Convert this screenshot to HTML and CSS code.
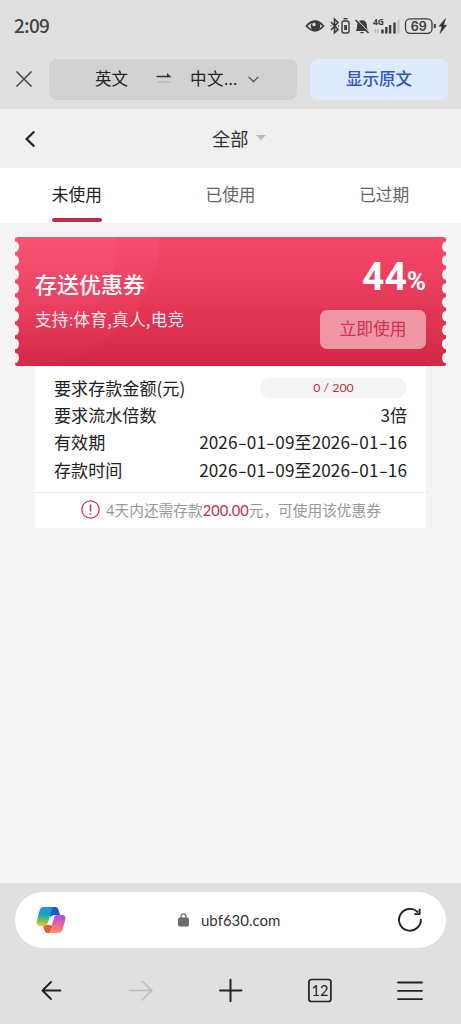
FILE: index.html
```html
<!DOCTYPE html>
<html lang="zh-CN">
<head>
<meta charset="utf-8">
<meta name="viewport" content="width=device-width, initial-scale=1">
<title>优惠券</title>
<link rel="stylesheet" href="styles.css">
</head>
<body>
<div class="screen">
  <header class="status">
    <span class="clock">2:09</span>
    <svg class="status-icons" width="144" height="24" viewBox="0 0 144 24" fill="none" stroke="#3c3c3c">
      <path d="M1.500 12Q10 2.500 18.500 12Q10 21.500 1.500 12Z" stroke-width="1.800"/>
      <circle cx="10.500" cy="12" r="4.800" fill="#3c3c3c" stroke="none"/><circle cx="9" cy="10.500" r="1.700" fill="#e0e0e0" stroke="none"/>
      <path d="M26 8l7 7.500-3.500 3.300V5.200L33 8.500 26 16M25.500 12h.8M33 12h1" stroke-width="1.600"/>
      <rect x="37" y="7" width="7" height="12" rx="2" stroke-width="1.400"/><path d="M38.500 4.700h4" stroke-width="1.400"/><path d="M39.200 11h2.800v5h-2.800z" fill="#3c3c3c" stroke="none"/>
      <path d="M50.500 17c1.700-1.500 1.300-4 1.700-6 .4-2.900 1.800-4.700 4.800-4.700s4.500 1.800 4.800 4.700c.3 2 0 4.500 1.700 6zM55 18h4c-.4 1.700-3.600 1.700-4 0z" fill="#3c3c3c" stroke="none"/>
      <path d="M51.500 5.300l12.500 13" stroke="#e0e0e0" stroke-width="1.200"/><path d="M50.500 6l13 13" stroke-width="1.600"/>
      <text x="68" y="10.500" class="net">4G</text>
      <path d="M70.500 15v4M73 15v4" stroke="#b8b8b8" stroke-width="1.400"/>
      <path d="M77.500 15.500v4M81.300 13v6.500M85.100 11v8.500M89.500 8.500v11" stroke-width="2.400"/><path d="M93.500 5.500v14" stroke="#bcbcbc" stroke-width="2"/>
      <rect x="100.500" y="4.800" width="26.500" height="14.500" rx="4.500" stroke-width="1.300"/><path d="M129.800 10v4" stroke-width="2"/>
      <text x="113.700" y="16.500" class="charge" text-anchor="middle">69</text>
      <path d="M140.500 4.500l-6.500 7.700h3l-2 7.300 6.500-8.300h-3z" fill="#303030" stroke="#303030" stroke-width=".5"/>
    </svg>
  </header>

  <section class="translate">
    <svg class="close" width="18" height="18" viewBox="0 0 18 18" stroke="#444" stroke-width="1.500" fill="none"><path d="M1.500 1.500l15 15M16.500 1.500l-15 15"/></svg>
    <div class="langs">
      <span class="lang-from">英文</span>
      <svg class="swap" width="16" height="12" viewBox="0 0 16 12" fill="none"><path d="M.5 3.500h12" stroke="#333" stroke-width="1.500"/><path d="M11 0l4.500 4.200H11z" fill="#333"/><path d="M3 9h11.500" stroke="#bdbdbd" stroke-width="1.500"/><path d="M1 8.300h4v3z" fill="#bdbdbd"/></svg>
      <span class="lang-to">中文...</span>
      <svg class="chev" width="11" height="7" viewBox="0 0 11 7" fill="none" stroke="#444" stroke-width="1.200"><path d="M.7.8l4.800 4.900L10.300.8"/></svg>
    </div>
    <div class="show-original">显示原文</div>
  </section>

  <nav class="title-bar">
    <svg class="back" width="11" height="18" viewBox="0 0 11 18" fill="none" stroke="#222" stroke-width="2.200"><path d="M9.300 1.500L1.600 9l7.700 7.500"/></svg>
    <div class="filter"><span>全部</span><svg width="10" height="5" viewBox="0 0 10 5"><path d="M0 0h10L5 5z" fill="#b8b8b8"/></svg></div>
  </nav>

  <div class="tabs">
    <div class="tab tab-active"><span>未使用</span></div>
    <div class="tab"><span>已使用</span></div>
    <div class="tab"><span>已过期</span></div>
  </div>

  <main class="content">
    <section class="ticket">
      <svg class="ticket-bg" width="431" height="129" viewBox="0 0 431 129">
        <defs>
          <linearGradient id="red" x1="0" y1="0" x2="0" y2="1"><stop offset="0" stop-color="#f54868"/><stop offset=".45" stop-color="#e83a5a"/><stop offset="1" stop-color="#d12744"/></linearGradient>
          <linearGradient id="glow" x1="0" y1="0" x2="0" y2="1"><stop offset="0" stop-color="#ff6a90" stop-opacity=".35"/><stop offset="1" stop-color="#ff6080" stop-opacity=".04"/></linearGradient>
          <pattern id="teeth" width="5" height="13.900" patternUnits="userSpaceOnUse" y="2.700"><ellipse cx="0" cy="6.950" rx="4" ry="5.200" fill="#f5f5f5"/></pattern>
          <clipPath id="edge"><rect width="431" height="129" rx="2"/></clipPath>
        </defs>
        <g clip-path="url(#edge)">
          <rect width="431" height="129" fill="url(#red)"/>
          <circle cx="15" cy="0" r="129" fill="url(#glow)"/>
          <circle cx="15" cy="13" r="86" fill="url(#glow)"/>
          <rect width="5" height="129" fill="url(#teeth)"/>
          <rect width="5" height="129" fill="url(#teeth)" transform="translate(431 0) scale(-1 1)"/>
        </g>
      </svg>
      <div class="ticket-info">
        <h1>存送优惠券</h1>
        <p>支持:体育,真人,电竞</p>
      </div>
      <div class="ticket-offer">
        <div class="rate">44<span>%</span></div>
        <div class="use">立即使用</div>
      </div>
    </section>

    <section class="details">
      <div class="rows">
        <div class="row"><span>要求存款金额(元)</span><span class="progress">0 / 200</span></div>
        <div class="row"><span>要求流水倍数</span><span class="times">3倍</span></div>
        <div class="row"><span>有效期</span><span class="date">2026<i>-</i>01<i>-</i>09至2026<i>-</i>01<i>-</i>16</span></div>
        <div class="row"><span>存款时间</span><span class="date">2026<i>-</i>01<i>-</i>09至2026<i>-</i>01<i>-</i>16</span></div>
      </div>
      <div class="notice">
        <svg width="19" height="19" viewBox="0 0 19 19" fill="none" stroke="#d03750" stroke-width="1.300"><circle cx="9.500" cy="9.500" r="8.700"/><path d="M9.500 4.500v7" stroke-width="1.500"/><path d="M9.500 13v1.700" stroke-width="1.600"/></svg>
        <span class="notice-text">4天内还需存款<b>200.00</b>元，可使用该优惠券</span>
      </div>
    </section>
  </main>

  <footer class="browser">
    <div class="address">
      <svg class="copilot" width="30" height="28" viewBox="0 0 30 28">
        <defs>
          <linearGradient id="cool" x1=".4" y1="0" x2=".3" y2="1"><stop offset="0" stop-color="#1b91dd"/><stop offset=".4" stop-color="#17a6bd"/><stop offset=".7" stop-color="#72bd57"/><stop offset="1" stop-color="#efc52d"/></linearGradient>
          <linearGradient id="warm" x1=".6" y1="0" x2=".4" y2="1"><stop offset="0" stop-color="#a650e5"/><stop offset=".5" stop-color="#ee6395"/><stop offset="1" stop-color="#ff965e"/></linearGradient>
        </defs>
        <path d="M14 1h5.500c1.700 0 2.400 1 2.900 2.500L24 9h-4.500c-3.500 0-5 1-5.500 3z" fill="#2454cf"/>
        <path d="M7 19h6l4 1-2 7h-3.500c-1.700 0-2.500-1-3-2.500z" fill="#e5573e"/>
        <path d="M7.500 1h11c-1.600 0-2.200 1-2.700 2.500l-4 13.500c-.7 2.200-1.800 3-4 3H4.500C1.500 20 .2 18 .9 15L3.400 5C4.100 2.200 5.200 1 7.500 1z" fill="url(#cool)"/>
        <path d="M21.500 9H26c2.800 0 4 1.700 3.300 4.500L26.700 23c-.8 2.800-2.200 4-4.700 4H11.500c1.600 0 2.400-1 2.900-2.500l3.500-12.300C18.600 10 19.500 9 21.500 9z" fill="url(#warm)"/>
      </svg>
      <div class="url">
        <svg width="11" height="14" viewBox="0 0 11 14"><rect y="4.500" width="11" height="9" rx="1.700" fill="#6c6c6c"/><path d="M3 5V3.300a2.500 2.500 0 015 0V5" fill="none" stroke="#6c6c6c" stroke-width="1.300"/></svg>
        <span>ubf630.com</span>
      </div>
      <svg class="reload" width="26" height="26" viewBox="0 0 26 26" fill="none" stroke="#222" stroke-width="1.900"><path d="M23.800 12A10.900 10.900 0 1 1 21 5.500"/><path d="M22.600 1.800v5.300h-5.300"/></svg>
    </div>
    <div class="tools">
      <svg width="90" height="30" viewBox="0 0 90 30" fill="none" stroke="#222" stroke-width="1.800" stroke-linecap="round" stroke-linejoin="round"><path d="M60.500 15.500H42.500M51 7L42.500 15.500l8.500 8.500"/></svg>
      <svg width="90" height="30" viewBox="0 0 90 30" fill="none" stroke="#bcbcbc" stroke-width="1.600" stroke-linecap="round" stroke-linejoin="round"><path d="M40 15.500H62M52 6l10 9.500L52 25"/></svg>
      <svg width="90" height="30" viewBox="0 0 90 30" fill="none" stroke="#222" stroke-width="2" stroke-linecap="round"><path d="M40 15.500H61.500M50.500 4.700v21.500"/></svg>
      <svg width="90" height="30" viewBox="0 0 90 30" fill="none" stroke="#222" stroke-width="1.700"><rect x="38.900" y="4.500" width="22" height="22" rx="2.500"/><text class="count" x="50" y="20.700" text-anchor="middle">12</text></svg>
      <svg width="90" height="30" viewBox="0 0 90 30" fill="none" stroke="#222" stroke-width="1.800" stroke-linecap="round"><path d="M38 7.500h24M38 15.800h24M38 24.200h24"/></svg>
    </div>
  </footer>
</div>
</body>
</html>
```

FILE: styles.css
```css
* { box-sizing: border-box; }
body {
  margin: 0;
  background: #f4f4f4;
  font-family: Lato, "Noto Sans CJK SC", sans-serif;
  color: #222;
}
svg { display: block; flex: none; }
.screen { width: 461px; height: 1024px; display: flex; flex-direction: column; overflow: hidden; }

.status { height: 49px; background: #e0e0e0; display: flex; align-items: center; justify-content: space-between; padding: 0 12px 0 14px; }
.clock { font: 500 19px/24px "Noto Sans CJK SC", sans-serif; letter-spacing: -.8px; color: #444; white-space: nowrap; }
.status-icons { margin-top: 2px; }
.net { font: 700 8.500px "Noto Sans", sans-serif; fill: #3c3c3c; stroke: none; }
.charge { font: 600 12.500px Inter, sans-serif; fill: #3c3c3c; stroke: none; }

.translate { height: 60px; background: #e0e0e0; display: flex; align-items: center; padding: 0 13px 0 15px; font-size: 16.500px; }
.langs { width: 248px; height: 41px; margin: 0 13px 0 16px; border-radius: 8px; background: #d2d2d2; display: flex; align-items: center; padding-left: 46px; }
.swap { margin: 0 18px 0 28px; }
.lang-from, .lang-to { line-height: 24px; white-space: nowrap; }
.lang-to { width: 50px; letter-spacing: .6px; }
.chev { margin-left: 8px; }
.show-original { flex: 1; height: 41px; border-radius: 8px; background: #dfeafd; color: #3158bd; font-weight: 500; line-height: 41px; text-align: center; }

.title-bar { height: 59px; background: #f0f0f0; display: flex; align-items: center; padding-left: 25px; }
.filter { display: flex; align-items: center; gap: 7px; margin: -2px 0 0 176px; font-size: 18.300px; color: #333; }

.tabs { height: 55px; background: #fff; display: grid; grid-template-columns: repeat(3, 1fr); font-size: 16.700px; color: #666; }
.tab { display: flex; justify-content: center; line-height: 54px; }
.tab span { height: 54px; }
.tab-active { color: #222; }
.tab-active span { display: flex; flex-direction: column; }
.tab-active span::after { content: ""; height: 4px; margin-top: -4px; border-radius: 2px; background: #bf2947; }

.content { flex: 1; padding: 14px 15px 0; }
.ticket { position: relative; height: 129px; display: flex; justify-content: space-between; padding: 0 20px; color: #fff; }
.ticket-bg { position: absolute; inset: 0; }
.ticket-info, .ticket-offer { position: relative; }
.ticket-info { padding-top: 31px; }
.ticket h1 { margin: 0; font-size: 22px; line-height: 33px; font-weight: 500; }
.ticket p { margin: 4px 0 0; font: 16.600px/28px "Noto Sans CJK SC", sans-serif; letter-spacing: .25px; color: #ffe8ec; }
.ticket-offer { display: flex; flex-direction: column; align-items: flex-end; padding-top: 20px; }
.rate { display: flex; align-items: baseline; height: 40px; font: 700 39px/40px Roboto, sans-serif; white-space: nowrap; }
.rate span { font-size: 26px; }
.use { width: 106px; height: 39px; margin-top: 13px; border-radius: 7px; background: #ef96a6; color: #ce304d; font-size: 16.800px; line-height: 38px; text-align: center; }

.details { margin: 0 20px; background: #fff; }
.rows { height: 126px; padding: 8px 19px 0 19px; }
.row { height: 27.200px; display: flex; align-items: center; justify-content: space-between; font: 17.100px/27px "Noto Sans CJK SC", sans-serif; white-space: nowrap; }
.progress { width: 147px; height: 20px; border-radius: 10px; background: #f5f5f5; color: #c62d4b; font: 12.300px/20px Lato, sans-serif; text-align: center; }
.date { letter-spacing: .1px; }
.date i { display: inline-block; width: 9.300px; font-style: normal; text-align: center; transform: scaleX(1.500); }
.notice { height: 36px; padding-bottom: 2px; border-top: 1px solid #e9e9e9; display: flex; align-items: center; gap: 6px; padding-left: 46px; font-size: 14.700px; color: #999; white-space: nowrap; }
.notice-text { line-height: 22px; }
.notice b { color: #c62d4b; font-weight: 400; }

.browser { height: 141px; background: #e0e0e0; padding-top: 9px; }
.address { height: 56px; margin: 0 15px; border-radius: 28px; background: #fff; display: flex; align-items: center; padding: 0 23px 0 21px; }
.url { flex: 1; display: flex; align-items: center; gap: 12px; padding-left: 112px; font-size: 15px; color: #333; }
.tools { display: flex; padding-top: 27px; }
.count { font: 14.500px Lato, sans-serif; fill: #222; stroke: none; }
```
